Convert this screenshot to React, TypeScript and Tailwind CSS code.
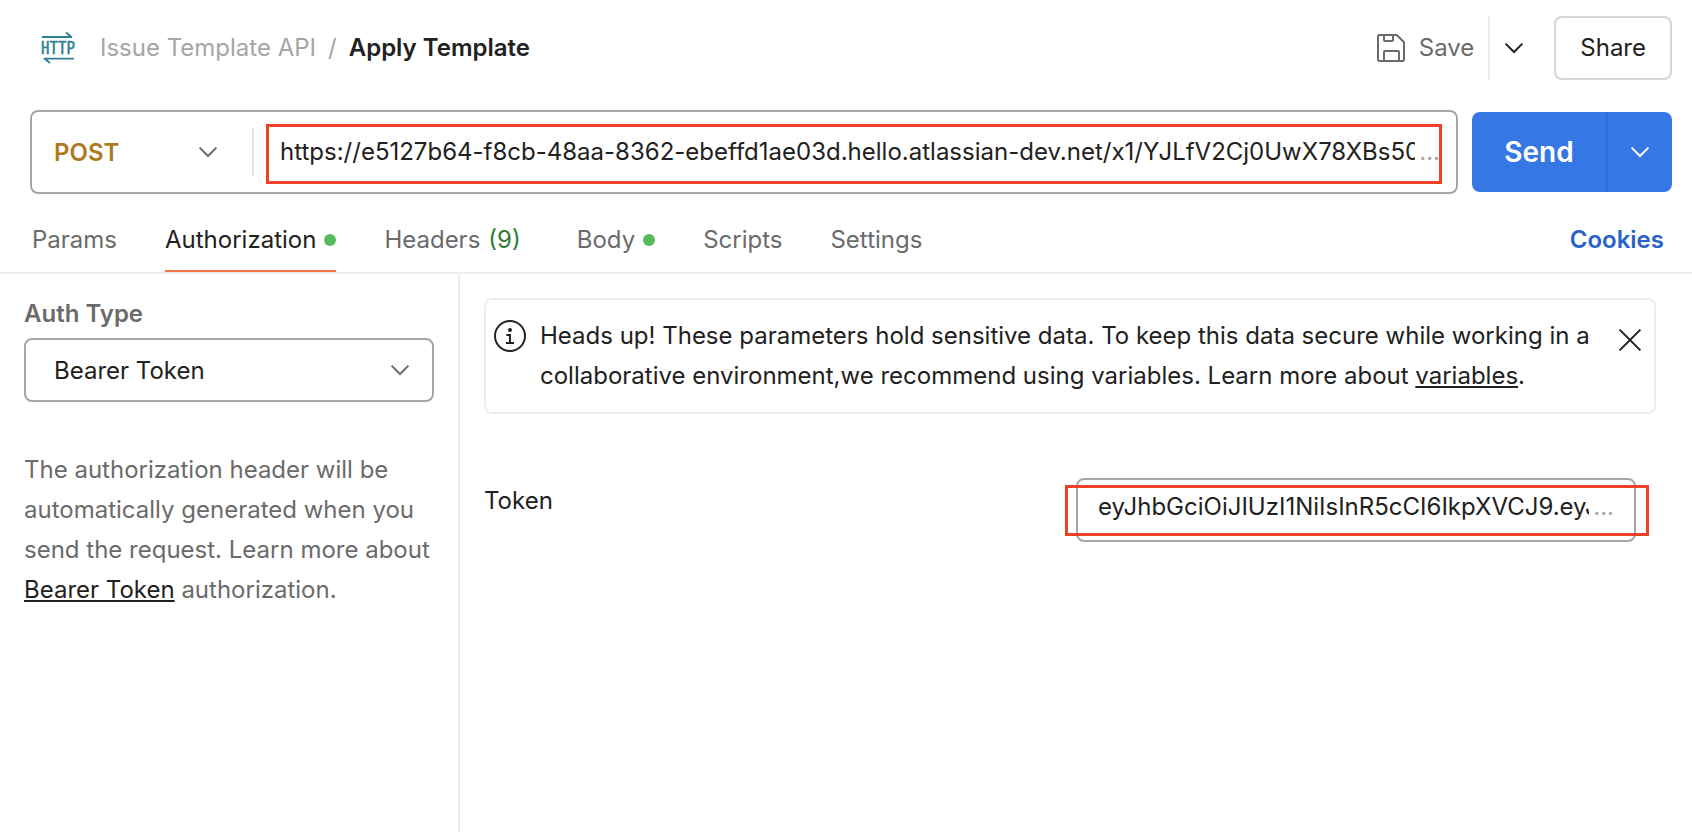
import { useState } from "react";
import type { ReactNode } from "react";
import clsx from "clsx";

type Tab = {
  id: string;
  label: string;
  count?: number;
  filled?: boolean;
};

const TABS: Tab[] = [
  { id: "params", label: "Params" },
  { id: "authorization", label: "Authorization", filled: true },
  { id: "headers", label: "Headers", count: 9 },
  { id: "body", label: "Body", filled: true },
  { id: "scripts", label: "Scripts" },
  { id: "settings", label: "Settings" },
];

const REQUEST_URL =
  "https://e5127b64-f8cb-48aa-8362-ebeffd1ae03d.hello.atlassian-dev.net/x1/YJLfV2Cj0UwX78XBs50";

const BEARER_TOKEN = "eyJhbGciOiJIUzI1NiIsInR5cCI6IkpXVCJ9.eyJ";

function Chevron({ className }: { className?: string }) {
  return (
    <svg
      viewBox="0 0 20 12"
      className={clsx("h-3 w-5 shrink-0", className)}
      fill="none"
      stroke="currentColor"
      strokeWidth="2"
      aria-hidden="true"
    >
      <path d="M1.6 1.6 10 10l8.4-8.4" />
    </svg>
  );
}

function HttpIcon() {
  return (
    <svg viewBox="0 0 32 32" className="size-8 shrink-0 overflow-visible text-[#2f7f92]" aria-hidden="true">
      <path d="M0 5h30M24 .6 30 5.4M32 26.6H2M8 31 2 26.2" fill="none" stroke="currentColor" strokeWidth="1.9" />
      <text
        x="16"
        y="22.4"
        textAnchor="middle"
        fontFamily="'Noto Sans Mono CJK SC', 'Noto Sans Mono CJK JP', 'DejaVu Sans Condensed', sans-serif"
        fontSize="17"
        fill="currentColor"
        stroke="currentColor"
        strokeWidth="0.4"
      >
        HTTP
      </text>
    </svg>
  );
}

function SaveIcon() {
  return (
    <svg
      viewBox="0 0 28 28"
      className="size-7 shrink-0"
      fill="none"
      stroke="currentColor"
      strokeWidth="2"
      strokeLinejoin="round"
      aria-hidden="true"
    >
      <path d="M2.2 1h17.6L27 8.2v17.6a1.2 1.2 0 0 1-1.2 1.2H2.2A1.2 1.2 0 0 1 1 25.8V2.2A1.2 1.2 0 0 1 2.2 1Z" />
      <path d="M7 1v5a1 1 0 0 0 1 1h7a1 1 0 0 0 1-1V1M7 27V18a1 1 0 0 1 1-1h13a1 1 0 0 1 1 1v9" />
    </svg>
  );
}

function InfoIcon() {
  return (
    <svg viewBox="0 0 32 32" className="size-8 shrink-0" fill="none" stroke="currentColor" strokeWidth="2" aria-hidden="true">
      <circle cx="16" cy="16" r="15" />
      <circle cx="16" cy="10" r="2" fill="currentColor" stroke="none" />
      <path d="M12.4 15H16v8M12 23h8" />
    </svg>
  );
}

function Highlight({ className }: { className: string }) {
  return <div className={clsx("pointer-events-none absolute border-3 border-[#ed4227]", className)} aria-hidden="true" />;
}

function RequestHeader() {
  return (
    <header className="flex h-16 items-center justify-between pr-5 pl-[42px]">
      <nav className="flex items-center" aria-label="Breadcrumb">
        <HttpIcon />
        <a href="#collection" className="ml-[26px] text-[#a6a6a6]">
          Issue Template API
        </a>
        <span className="mx-3 text-[#a6a6a6]">/</span>
        <h1 className="font-semibold">Apply Template</h1>
      </nav>
      <div className="flex h-full items-stretch">
        <button type="button" className="flex items-center gap-[14px] pr-[14px] text-[#6b6b6b]">
          <SaveIcon />
          Save
        </button>
        <button type="button" className="flex items-center border-l-2 border-[#ededed] px-[14px]" aria-label="Save options">
          <Chevron />
        </button>
        <button type="button" className="ml-4 rounded-lg border-2 border-[#d6d6d6] px-6">
          Share
        </button>
      </div>
    </header>
  );
}

function RequestBar() {
  const [method, setMethod] = useState("POST");
  const [url, setUrl] = useState(REQUEST_URL);

  return (
    <form className="mt-[30px] flex items-center gap-[14px] pr-5 pl-[30px]" onSubmit={(e) => e.preventDefault()}>
      <div className="relative flex h-[84px] min-w-0 flex-1 items-center rounded-lg border-2 border-[#a6a6a6]">
        <div className="grid h-12 w-[222px] shrink-0 items-center border-r-2 border-[#e3e3e3]">
          <select
            value={method}
            onChange={(e) => setMethod(e.target.value)}
            aria-label="HTTP method"
            className="col-start-1 row-start-1 h-full appearance-none bg-transparent pt-0.5 pl-[22px] font-semibold text-[#ad7a1f] outline-none"
          >
            <option>GET</option>
            <option>POST</option>
            <option>PUT</option>
            <option>DELETE</option>
          </select>
          <Chevron className="pointer-events-none col-start-1 row-start-1 mr-[34px] justify-self-end text-[#6b6b6b]" />
        </div>
        <input
          type="text"
          value={url}
          onChange={(e) => setUrl(e.target.value)}
          aria-label="Request URL"
          className="ml-[26px] min-w-0 flex-1 outline-none"
        />
        <span className="mr-4 ml-1 text-[#a6a6a6]">...</span>
        <Highlight className="top-3 right-[14px] bottom-2 left-[234px]" />
      </div>
      <div className="flex h-20 overflow-hidden rounded-lg bg-[#3578e5] text-white">
        <button type="submit" className="w-[134px] text-[28px] font-semibold">
          Send
        </button>
        <button
          type="button"
          className="flex w-[66px] items-center justify-center border-l-2 border-[#2f6dd3]"
          aria-label="Send options"
        >
          <Chevron />
        </button>
      </div>
    </form>
  );
}

function RequestTabs() {
  const [active, setActive] = useState("authorization");

  return (
    <div className="mt-[14px] flex h-[66px] items-stretch justify-between border-b-2 border-[#ededed] pr-7 pl-8">
      <div className="flex gap-12" role="tablist">
        {TABS.map((tab) => {
          const isActive = tab.id === active;

          return (
            <button
              type="button"
              key={tab.id}
              role="tab"
              aria-selected={isActive}
              onClick={() => setActive(tab.id)}
              className={clsx(
                "flex items-center gap-2 border-b-2 pt-0.5",
                isActive ? "border-[#f3724a] text-[#212121]" : "border-transparent text-[#6b6b6b]",
              )}
            >
              {tab.label}
              {tab.count !== undefined && <span className="mr-2 text-[#2f7d32]">({tab.count})</span>}
              {tab.filled && <span className="size-3 rounded-full bg-[#56b85f]" />}
            </button>
          );
        })}
      </div>
      <a href="#cookies" className="flex items-center font-semibold text-[#2a62cb]">
        Cookies
      </a>
    </div>
  );
}

function AuthSidebar() {
  const [authType, setAuthType] = useState("Bearer Token");

  return (
    <aside className="w-[460px] shrink-0 border-r-2 border-[#ededed] pt-5 pr-6 pl-6 text-[#6b6b6b]">
      <label htmlFor="auth-type" className="block font-semibold">
        Auth Type
      </label>
      <div className="mt-1 grid h-16 items-center rounded-lg border-2 border-[#a6a6a6]">
        <select
          id="auth-type"
          value={authType}
          onChange={(e) => setAuthType(e.target.value)}
          className="col-start-1 row-start-1 h-full appearance-none bg-transparent pt-0.5 pl-7 text-[#212121] outline-none"
        >
          <option>No Auth</option>
          <option>Basic Auth</option>
          <option>Bearer Token</option>
          <option>API Key</option>
        </select>
        <Chevron className="pointer-events-none col-start-1 row-start-1 mr-[22px] justify-self-end" />
      </div>
      <p className="mt-12">
        The authorization header will be automatically generated when you send the request. Learn more about{" "}
        <TextLink href="#bearer-token">Bearer Token</TextLink> authorization.
      </p>
    </aside>
  );
}

function TextLink({ href, children }: { href: string; children: ReactNode }) {
  return (
    <a href={href} className="text-[#212121] underline decoration-2 underline-offset-2">
      {children}
    </a>
  );
}

function SensitiveDataNotice({ onClose }: { onClose: () => void }) {
  return (
    <div className="flex items-start rounded-lg border-2 border-[#ededed] pt-4 pr-3 pb-4 pl-2" role="status">
      <div className="flex h-10 items-center">
        <InfoIcon />
      </div>
      <p className="ml-[14px] min-h-20 flex-1">
        Heads up! These parameters hold sensitive data. To keep this data secure while working in a collaborative
        environment,we recommend using variables. Learn more about <TextLink href="#variables">variables</TextLink>.
      </p>
      <button type="button" onClick={onClose} className="ml-7 flex h-12 items-center" aria-label="Dismiss">
        <svg viewBox="0 0 24 24" className="size-6" fill="none" stroke="currentColor" strokeWidth="2" aria-hidden="true">
          <path d="m1.6 1.6 20.8 20.8M22.4 1.6 1.6 22.4" />
        </svg>
      </button>
    </div>
  );
}

function AuthPanel() {
  const [showNotice, setShowNotice] = useState(true);
  const [token, setToken] = useState(BEARER_TOKEN);

  return (
    <section className="min-w-0 flex-1 pt-6 pr-9 pl-6">
      {showNotice && <SensitiveDataNotice onClose={() => setShowNotice(false)} />}
      <div className="mt-16 flex items-start justify-between pr-5">
        <label htmlFor="token" className="pt-[3px]">
          Token
        </label>
        <div className="relative flex h-16 w-[560px] items-center rounded-lg border-2 border-[#a6a6a6] px-5 pb-1.5">
          <input
            id="token"
            type="text"
            value={token}
            onChange={(e) => setToken(e.target.value)}
            className="min-w-0 flex-1 outline-none"
          />
          <span className="ml-1 text-[#a6a6a6]">...</span>
          <Highlight className="top-[5px] -right-[15px] bottom-1 -left-[13px]" />
        </div>
      </div>
    </section>
  );
}

export default function App() {
  return (
    <main className="flex min-h-screen flex-col bg-white pt-4 font-['Inter',sans-serif] text-2xl leading-10 text-[#212121]">
      <RequestHeader />
      <RequestBar />
      <RequestTabs />
      <div className="flex flex-1">
        <AuthSidebar />
        <AuthPanel />
      </div>
    </main>
  );
}
